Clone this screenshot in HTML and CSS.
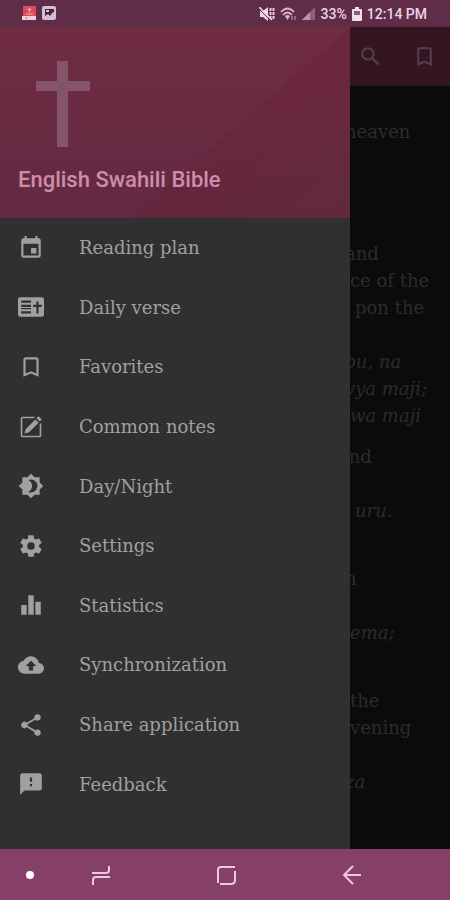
FILE: index.html
```html
<!DOCTYPE html>
<html lang="en">
<head>
<meta charset="utf-8">
<meta name="viewport" content="width=device-width, initial-scale=1">
<title>English Swahili Bible</title>
<link rel="stylesheet" href="styles.css">
</head>
<body>
<header class="status">
  <div class="status-group">
    <svg width="15" height="15" viewBox="0 0 15 15"><path fill="#d94a5e" d="M1 0h13v10H1z"/><path fill="#f2cfd2" d="M0 10h14v4H0z"/><path fill="#b98088" d="M4 11h1v2H4z"/><path stroke="#f5a6ac" d="M7.500 1.500v5M5.500 3.500h4M4 8h7"/></svg>
    <svg width="15" height="15" viewBox="0 0 15 15"><rect width="14" height="14" rx="2" fill="#d5bdd5"/><path fill="#4c2143" d="M3 3h9v3l-2 1-2 3-2-2-3 2z"/><path fill="#d5bdd5" d="M4 4h3v2H4z"/></svg>
  </div>
  <div class="status-group">
    <svg width="16" height="14" viewBox="0 0 16 14"><path fill="#f0d8e6" d="M1 4h3l5-4v14L4 10H1z"/><path stroke="#e9cfdf" stroke-width="2" stroke-dasharray="3 1" d="M11.500 1v12M14.500 1v12"/><path stroke="#602c48" d="M0 2l12 12"/><path stroke="#f0d8e6" stroke-width="1.500" d="M0 0l13 13"/></svg>
    <svg width="17" height="14" viewBox="0 0 17 14"><g fill="none" stroke="#d7b5cb" stroke-width="1.800"><path d="M1 5q6.500-7 13 0M3 8q4.500-5 9 0"/></g><path fill="#d7b5cb" d="M5 9q2.500-2 5 0l-2.500 4z"/><path stroke="#a77c96" stroke-width="1.500" d="M12 9v4M15 9v4"/></svg>
    <svg width="14" height="14" viewBox="0 0 14 14"><path fill="#916078" d="M13 0v13H0z"/><path fill="#bd91aa" d="M8 5v8H0z"/></svg>
    <span>33%</span>
    <svg width="10" height="14" viewBox="0 0 10 14"><path fill="#f1dce9" d="M3 0h4v2h2q1 0 1 1v10q0 1-1 1H1q-1 0-1-1V3q0-1 1-1h2z"/><path fill="#876078" d="M2 4h6v4H2z"/></svg>
    <span>12:14 PM</span>
  </div>
</header>

<div class="app">
  <main class="reader">
    <div class="toolbar">
      <button type="button" aria-label="Search"><svg width="25" height="25" viewBox="0 0 24 24"><path d="M15.500 14h-.79l-.28-.27A6.470 6.470 0 0 0 16 9.500 6.500 6.500 0 1 0 9.500 16c1.610 0 3.090-.59 4.230-1.570l.27.28v.79l5 4.990L20.490 19zm-6 0a4.500 4.500 0 1 1 0-9 4.500 4.500 0 0 1 0 9z"/></svg></button>
      <button type="button" aria-label="Bookmark"><svg width="25" height="25" viewBox="0 0 24 24"><path d="M17 3H7c-1.100 0-2 .9-2 2v16l7-3 7 3V5c0-1.100-.9-2-2-2zm0 15-5-2.180L7 18V5h10z"/></svg></button>
    </div>
    <div class="verses">
      <p class="intro nudge">heaven</p>
      <p class="nudge">and</p>
      <p>ce of the</p>
      <p class="inset">pon the</p>
      <p class="sw after nudge">ou, na</p>
      <p class="sw nudge">vya maji;</p>
      <p class="sw">wa maji</p>
      <p class="verse tuck">and</p>
      <p class="sw after inset">uru.</p>
      <p class="later nudge">n</p>
      <p class="sw after">ema;</p>
      <p class="later">the</p>
      <p>vening</p>
      <p class="sw after nudge">za</p>
    </div>
  </main>

  <aside class="drawer">
    <div class="hero">
      <svg class="cross" width="54" height="86" viewBox="0 0 54 86"><path d="M21 0h11v20h22v10H32v56H21V30H0V20h21z"/></svg>
      <h1>English Swahili Bible</h1>
    </div>
    <nav class="menu">
      <a href="#plan"><svg viewBox="0 0 24 24"><path d="M17 12h-5v5h5zM16 1v2H8V1H6v2H5c-1.110 0-2 .9-2 2v14a2 2 0 0 0 2 2h14c1.100 0 2-.9 2-2V5c0-1.100-.9-2-2-2h-1V1zm3 18H5V8h14z"/></svg>Reading plan</a>
      <a href="#verse"><svg viewBox="0 0 24 24"><path fill-rule="evenodd" d="M2 3h20q2 0 2 2v14q0 2-2 2H2q-2 0-2-2V5q0-2 2-2zm1 3v2h9V6zm0 4v2h9v-2zm0 3v1h9v-1zm0 3v2h9v-2zM17 7v3h-3v2h3v6h2v-6h3v-2h-3V7z"/></svg>Daily verse</a>
      <a href="#favorites"><svg viewBox="0 0 24 24"><path d="M17 3H7c-1.100 0-2 .9-2 2v16l7-3 7 3V5c0-1.100-.9-2-2-2zm0 15-5-2.180L7 18V5h10z"/></svg>Favorites</a>
      <a href="#notes"><svg viewBox="0 0 24 24"><path d="M16 2.500H4q-1.500 0-1.500 1.500v16q0 1.500 1.500 1.500h16q1.500 0 1.500-1.500V8L20 9.500V20H4V4h10.500z"/><path d="m7 14 9-9 3 3-9 9-4 1zM17 4l1.500-1.500q.5-.5 1 0l2 2q.5.500 0 1L20 7z"/></svg>Common notes</a>
      <a href="#night"><svg viewBox="0 0 24 24"><path d="M20 8.690V4h-4.690L12 .69 8.690 4H4v4.690L.69 12 4 15.310V20h4.690L12 23.310 15.310 20H20v-4.690L23.310 12zM12 18c-.89 0-1.740-.2-2.500-.55C11.560 16.500 13 14.420 13 12s-1.440-4.500-3.500-5.450A6 6 0 1 1 12 18z"/></svg>Day/Night</a>
      <a href="#settings"><svg viewBox="0 0 24 24"><path d="M19.430 12.980a7.800 7.800 0 0 0 0-1.960l2.110-1.650c.19-.15.24-.42.12-.64l-2-3.460c-.12-.22-.39-.3-.61-.22l-2.490 1a7.300 7.300 0 0 0-1.690-.98l-.38-2.650A.49.49 0 0 0 14 2h-4c-.25 0-.46.18-.49.42l-.38 2.650c-.61.25-1.170.59-1.690.98l-2.490-1c-.23-.09-.49 0-.61.22l-2 3.460c-.13.22-.07.49.12.64l2.110 1.650a7.900 7.900 0 0 0 0 1.960l-2.110 1.650c-.19.15-.24.42-.12.64l2 3.460c.12.22.39.3.61.22l2.490-1c.52.4 1.080.73 1.690.98l.38 2.650c.03.24.24.42.49.42h4c.25 0 .46-.18.49-.42l.38-2.650c.61-.25 1.170-.59 1.690-.98l2.490 1c.23.09.49 0 .61-.22l2-3.460c.12-.22.07-.49-.12-.64zM12 15.500a3.500 3.500 0 1 1 0-7 3.500 3.500 0 0 1 0 7z"/></svg>Settings</a>
      <a href="#statistics"><svg viewBox="0 0 24 24"><path d="M3 12h5v9H3zm6.500-9h5v18h-5zM16 9h5v12h-5z"/></svg>Statistics</a>
      <a href="#sync"><svg viewBox="0 0 24 24"><path d="M19.350 10.040A7.490 7.490 0 0 0 12 4C9.110 4 6.600 5.640 5.350 8.040A5.990 5.990 0 0 0 0 14c0 3.310 2.690 6 6 6h13c2.760 0 5-2.240 5-5 0-2.640-2.050-4.780-4.650-4.960zM14 13v4h-4v-4H7l5-5 5 5z"/></svg>Synchronization</a>
      <a href="#share"><svg viewBox="0 0 24 24"><path d="M18 16.080c-.76 0-1.440.3-1.960.77L8.910 12.700a3.300 3.300 0 0 0 0-1.400l7.050-4.110A3 3 0 1 0 15 5c0 .24.040.47.090.7L8.040 9.810a3 3 0 1 0 0 4.380l7.120 4.160c-.05.21-.08.43-.08.65a2.920 2.920 0 1 0 2.920-2.920z"/></svg>Share application</a>
      <a href="#feedback"><svg viewBox="0 0 24 24"><path d="M20 2H4c-1.100 0-1.990.9-1.990 2L2 22l4-4h14c1.100 0 2-.9 2-2V4c0-1.100-.9-2-2-2zm-7 12h-2v-2h2zm0-4h-2V6h2z"/></svg>Feedback</a>
    </nav>
  </aside>
</div>

<footer class="system">
  <button type="button" aria-label="Toggle navigation bar"><svg width="20" height="20" viewBox="0 0 20 20"><circle cx="10" cy="10" r="4" fill="#fff"/></svg></button>
  <button type="button" aria-label="Recent apps"><svg width="20" height="20" viewBox="0 0 20 20"><path class="line" d="M1 8h14q3 0 3-3V1M19 12H5q-3 0-3 3v5"/></svg></button>
  <button type="button" aria-label="Home"><svg width="20" height="20" viewBox="0 0 20 20"><path class="line" d="M19 2H5Q2 2 2 5v13M4 19h11q4 0 4-4V6"/></svg></button>
  <button type="button" aria-label="Back"><svg width="20" height="20" viewBox="0 0 20 20"><path class="line" d="M19 10H2M11 1l-9 9 9 9"/></svg></button>
</footer>
</body>
</html>
```
FILE: styles.css
```css
* { box-sizing: border-box; }

body {
  margin: 0;
  min-height: 100vh;
  display: flex;
  flex-direction: column;
  background: #0b0b0b;
  font-family: Roboto, sans-serif;
}

svg { display: block; flex: none; }
button { display: block; padding: 0; border: 0; background: none; }
h1, p { margin: 0; }

.status {
  height: 27px;
  padding: 0 23px 0 22px;
  display: flex;
  align-items: center;
  justify-content: space-between;
  background: #602d48;
  color: #ecd3e2;
  font-size: 14px;
  font-weight: 500;
}

.status-group { display: flex; align-items: center; gap: 5px; }

.app { position: relative; flex: 1; display: flex; flex-direction: column; }

.reader { flex: 1; overflow: hidden; }

.toolbar {
  height: 59px;
  padding: 0 13px;
  display: flex;
  align-items: center;
  justify-content: flex-end;
  gap: 29px;
  background: #341522;
}
.toolbar path { fill: #54404a; }

.verses {
  width: 100px;
  margin-left: auto;
  padding-top: 32px;
  color: #2b2b2b;
  font-family: "Roboto Slab", "DejaVu Serif", serif;
  font-size: 18px;
  line-height: 27px;
  white-space: nowrap;
}
.intro { margin-bottom: 95px; }
.sw { font-style: italic; }
.after { margin-top: 27px; }
.verse { margin-top: 14px; }
.later { margin-top: 41px; }
.tuck { margin-left: -12px; }
.nudge { margin-left: -5px; }
.inset { margin-left: 5px; }

.drawer {
  position: absolute;
  inset: 0 100px 0 0;
  display: flex;
  flex-direction: column;
  padding-bottom: 35px;
  background: #303030;
}

.hero {
  height: 191px;
  padding: 34px 18px 24px;
  display: flex;
  flex-direction: column;
  justify-content: space-between;
  background:
    linear-gradient(139deg, transparent 61%, #6a1e3459 62%, #5f293a59),
    linear-gradient(#702c42, #612a42);
}
.cross { margin-left: 18px; fill: #84556a; }
.hero h1 {
  color: #cf8cab;
  font-size: 22px;
  line-height: 28px;
  font-weight: 500;
}

.menu { flex: 1; display: flex; flex-direction: column; }
.menu a {
  flex: 1;
  display: flex;
  align-items: center;
  gap: 35px;
  padding: 0 18px;
  color: #a0a0a0;
  font-family: "Roboto Slab", "DejaVu Serif", serif;
  font-size: 18px;
  text-decoration: none;
}
.menu svg { width: 26px; height: 26px; fill: #a0a0a0; }

.system {
  height: 51px;
  padding: 0 88px 0 20px;
  display: grid;
  grid-template-columns: 71fr 126fr 126fr 20px;
  align-items: center;
  background: #863f67;
}
.line { fill: none; stroke: #edc8e2; stroke-width: 2; }
```
